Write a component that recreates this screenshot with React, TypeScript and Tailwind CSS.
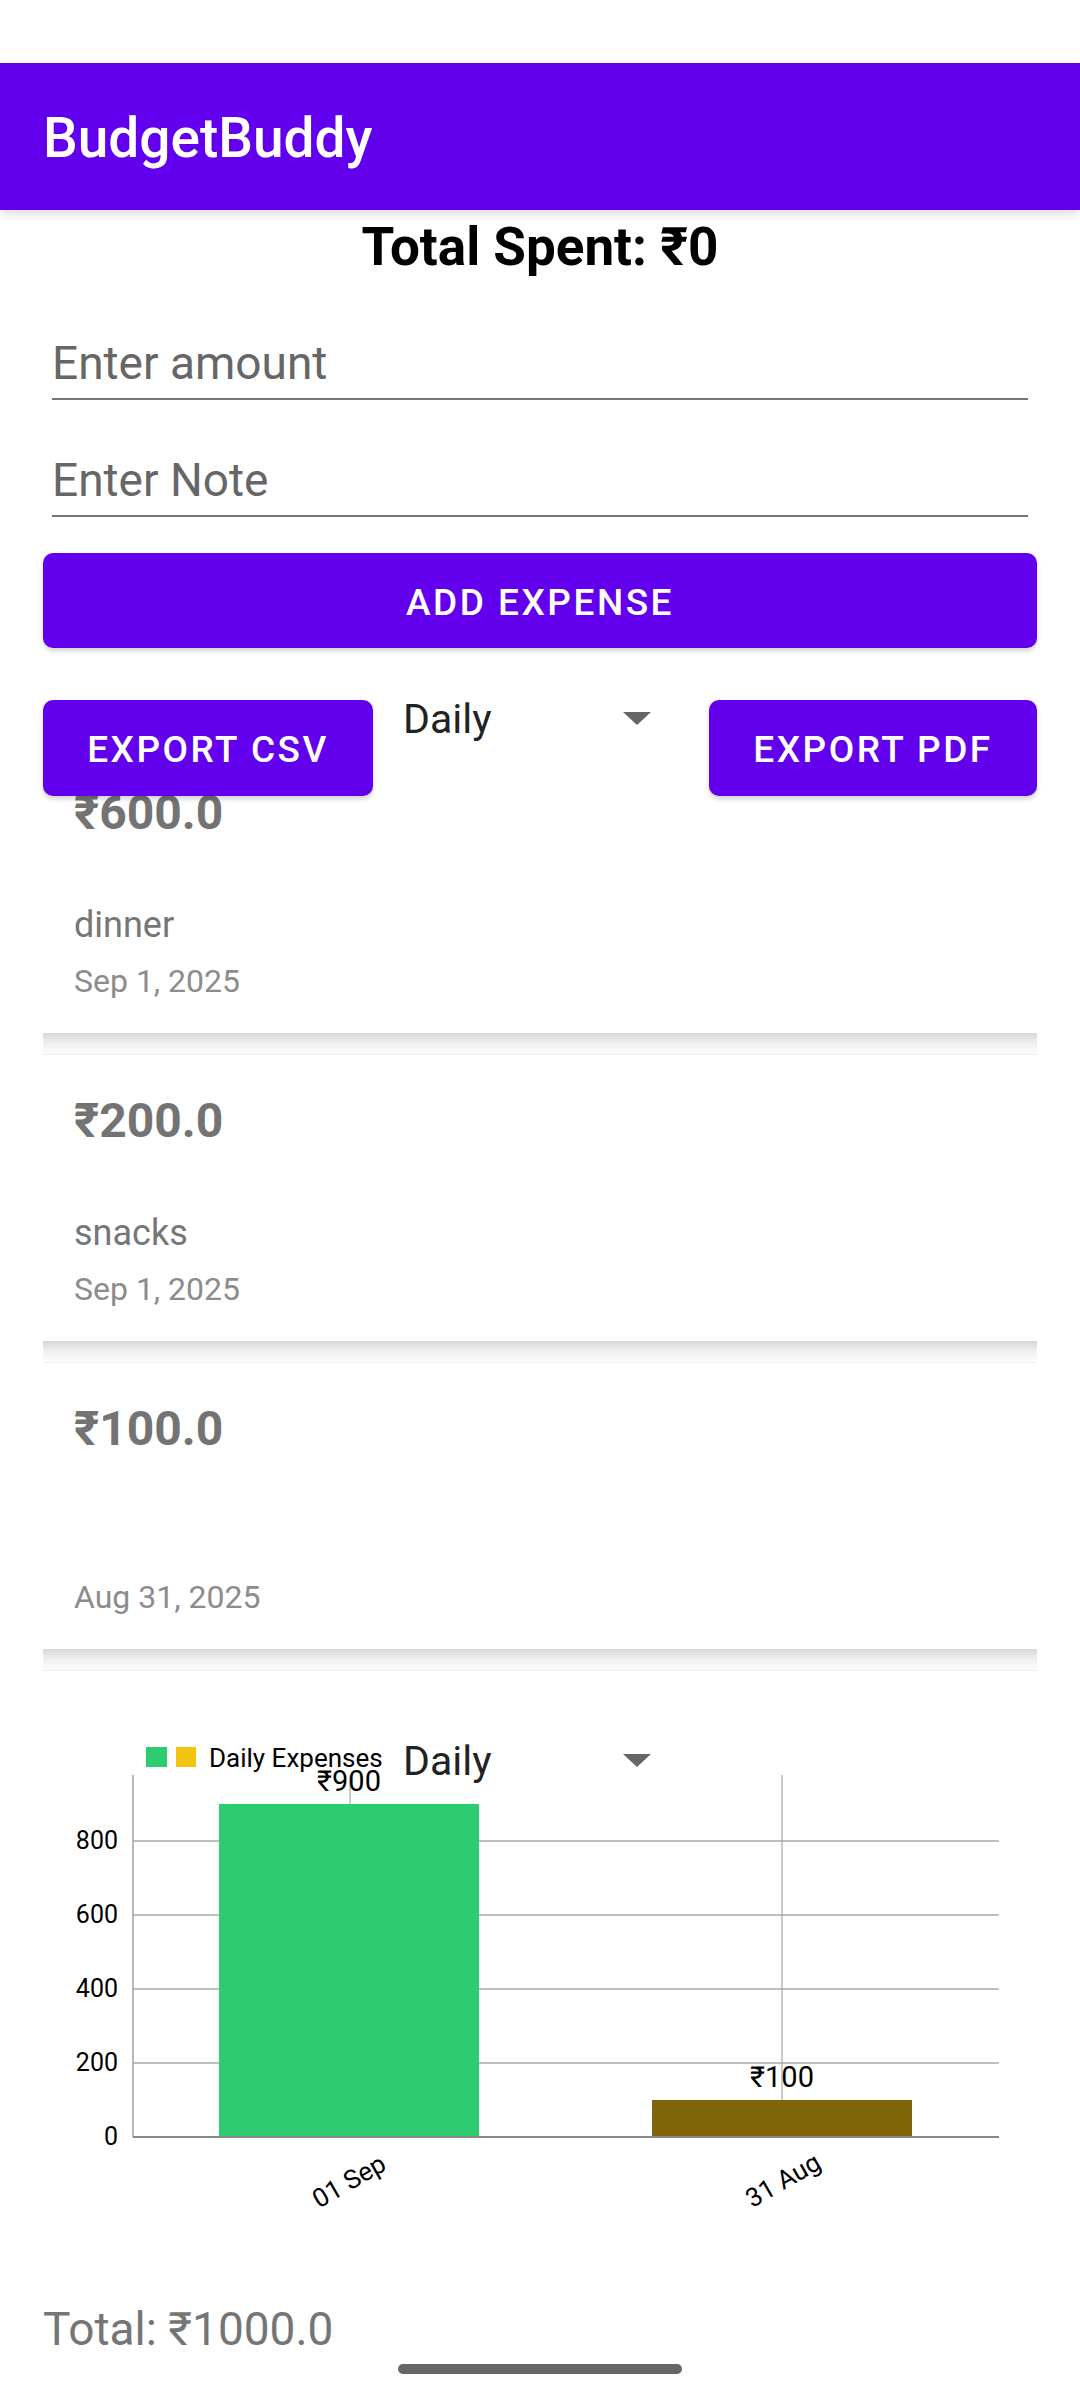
import React from "react";

const expenses = [
  { amount: "₹600.0", note: "dinner", date: "Sep 1, 2025" },
  { amount: "₹200.0", note: "snacks", date: "Sep 1, 2025" },
  { amount: "₹100.0", note: "", date: "Aug 31, 2025" },
  { amount: "₹100.0", note: "", date: "Sep 1, 2025" },
];

const Caret = () => (
  <svg width="28" height="13" viewBox="0 0 28 13">
    <polygon points="0,0 28,0 14,13" fill="#666666" />
  </svg>
);

const Spinner = ({ className = "" }: { className?: string }) => (
  <div className={`flex items-start ${className}`}>
    <span className="text-[41px] leading-[48px] text-[#222]">Daily</span>
    <span className="ml-auto mt-[17px]">
      <Caret />
    </span>
  </div>
);

const ExpenseCard = ({ amount, note, date }: { amount: string; note: string; date: string }) => (
  <div>
    <div className="bg-white border-t border-[#eeeeee] px-[31px] pt-[38px] pb-[33px]">
      <div className="text-[48px] leading-[56px] font-bold text-[#737373]">{amount}</div>
      <div className="mt-[63px] h-[42px] text-[36px] leading-[42px] text-[#767676]">{note}</div>
      <div className="mt-[17px] text-[32px] leading-[37px] text-[#8c8c8c]">{date}</div>
    </div>
    <div className="h-[21px] bg-gradient-to-b from-[#d6d6d6] via-[#f1f1f1] to-[#fcfcfc]" />
  </div>
);

const Chart = () => {
  const grid = [
    { y: 141, label: "800" },
    { y: 215, label: "600" },
    { y: 289, label: "400" },
    { y: 363, label: "200" },
  ];
  return (
    <svg width="1080" height="540" viewBox="0 0 1080 540" className="block" fontFamily="Roboto, sans-serif">
      {/* legend */}
      <rect x="146" y="47" width="21" height="20" fill="#2ECC71" />
      <rect x="176" y="47" width="20" height="20" fill="#F1C40F" />
      <text x="209" y="67" fontSize="26" fill="#000">Daily Expenses</text>

      {/* grid */}
      <line x1="350" y1="75" x2="350" y2="437" stroke="#a8a8a8" strokeWidth="1.2" />
      <line x1="782" y1="75" x2="782" y2="437" stroke="#a8a8a8" strokeWidth="1.2" />
      {grid.map((g) => (
        <line key={g.label} x1="133" y1={g.y} x2="999" y2={g.y} stroke="#a8a8a8" strokeWidth="1.6" />
      ))}
      <line x1="133" y1="75" x2="133" y2="437" stroke="#9a9a9a" strokeWidth="1.4" />

      {/* bars */}
      <rect x="219" y="104" width="260" height="333" fill="#2ECC71" />
      <rect x="652" y="400" width="260" height="37" fill="#7F6508" />
      <line x1="133" y1="437" x2="999" y2="437" stroke="#888" strokeWidth="2" />

      {/* y labels */}
      {grid.map((g) => (
        <text key={g.label} x="118" y={g.y + 8} fontSize="25" textAnchor="end" fill="#000">
          {g.label}
        </text>
      ))}
      <text x="118" y="445" fontSize="25" textAnchor="end" fill="#000">0</text>

      {/* values */}
      <text x="349" y="91" fontSize="29" textAnchor="middle" fill="#000">₹900</text>
      <text x="782" y="387" fontSize="29" textAnchor="middle" fill="#000">₹100</text>

      {/* x labels */}
      <text x="349" y="481" fontSize="26" textAnchor="middle" dominantBaseline="central" fill="#000" transform="rotate(-30 349 481)">
        01 Sep
      </text>
      <text x="783" y="480" fontSize="26" textAnchor="middle" dominantBaseline="central" fill="#000" transform="rotate(-30 783 480)">
        31 Aug
      </text>
    </svg>
  );
};

export default function App() {
  return (
    <div className="w-[1080px] h-[2400px] bg-white overflow-hidden flex flex-col font-['Roboto',sans-serif]">
      {/* status bar */}
      <div className="h-[63px] shrink-0" />

      {/* app bar */}
      <div className="h-[147px] shrink-0 bg-[#6200EE] px-[43px] pt-[4px] flex items-center relative z-10 shadow-[0_4px_10px_rgba(0,0,0,0.14)]">
        <span className="text-[55px] font-medium text-white leading-none">BudgetBuddy</span>
      </div>

      <div className="mt-[5px] text-center text-[53px] leading-[64px] font-bold text-black">Total Spent: ₹0</div>

      {/* inputs */}
      <div className="mt-[57px] mx-[52px] border-b-2 border-[#767676] pb-[8px]">
        <div className="text-[46px] leading-[54px] text-[#666]">Enter amount</div>
      </div>
      <div className="mt-[53px] mx-[52px] border-b-2 border-[#767676] pb-[8px]">
        <div className="text-[46px] leading-[54px] text-[#666]">Enter Note</div>
      </div>

      <button className="mt-[36px] mx-[43px] h-[95px] pt-[4px] rounded-[10px] bg-[#6200EE] text-white text-[37px] font-medium tracking-[2.5px] shadow-[0_3px_5px_rgba(0,0,0,0.18)]">
        ADD EXPENSE
      </button>

      {/* export row */}
      <div className="mt-[52px] mx-[43px] flex items-start h-[96px] relative z-10">
        <button className="w-[330px] h-[96px] pt-[3px] rounded-[10px] bg-[#6200EE] text-white text-[37px] font-medium tracking-[2.5px] shadow-[0_3px_5px_rgba(0,0,0,0.18)]">
          EXPORT CSV
        </button>
        <Spinner className="w-[336px] -mt-[5px] pl-[30px] pr-[58px]" />
        <button className="w-[328px] h-[96px] pt-[3px] rounded-[10px] bg-[#6200EE] text-white text-[37px] font-medium tracking-[2.5px] shadow-[0_3px_5px_rgba(0,0,0,0.18)]">
          EXPORT PDF
        </button>
      </div>

      {/* expense list */}
      <div className="h-[904px] shrink-0 overflow-hidden">
        <div className="-mt-[50px] mx-[43px] flex flex-col">
          {expenses.map((e, i) => (
            <ExpenseCard key={i} amount={e.amount} note={e.note} date={e.date} />
          ))}
        </div>
      </div>

      {/* chart */}
      <div className="relative h-[540px] shrink-0">
        <Chart />
        <Spinner className="absolute left-[403px] top-[37px] w-[306px] pr-[58px]" />
      </div>

      <div className="mt-[62px] px-[43px] text-[46px] leading-[54px] text-[#757575]">Total: ₹1000.0</div>

      <div className="mt-[8px] mx-auto w-[284px] h-[10px] rounded-full bg-[#666]" />
    </div>
  );
}
